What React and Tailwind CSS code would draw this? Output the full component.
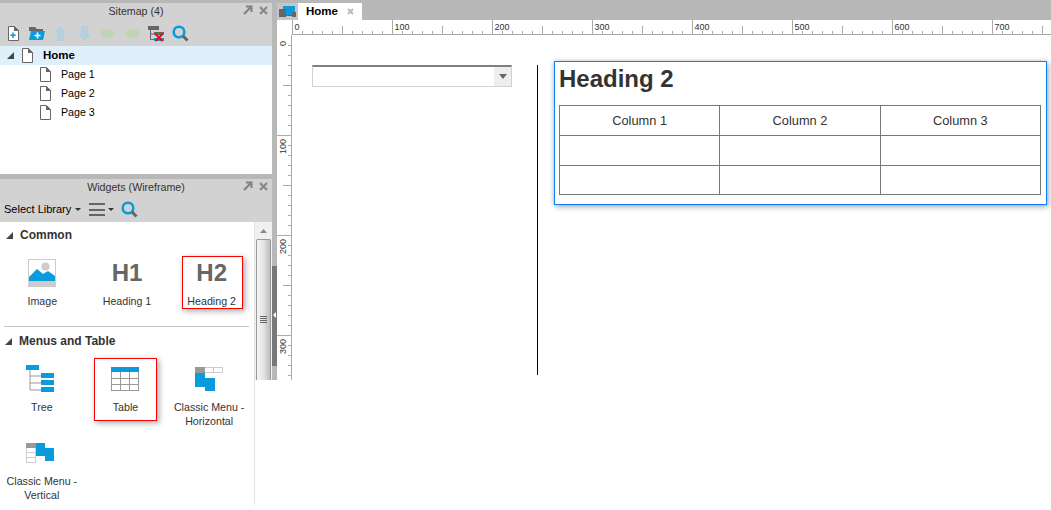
const BLUE = "#0a9bdc";

function PageIcon() {
  return (
    <svg width="11" height="15" viewBox="0 0 11 15" className="shrink-0">
      <path d="M.5.5H6.5L10.5 4.5V14.5H.5Z" fill="#fff" stroke="#666" />
      <path d="M6 0V5H11Z" fill="#666" />
    </svg>
  );
}
function NewPageIcon() {
  return (
    <svg width="11" height="15" viewBox="0 0 11 15" className="shrink-0">
      <path d="M.5.5H6.5L10.5 4.5V14.5H.5Z" fill="#fff" stroke="#666" />
      <path d="M6 0V5H11Z" fill="#666" />
      <path d="M5 6.5V12M2.3 9.2H7.8" stroke={BLUE} strokeWidth="1.6" />
    </svg>
  );
}
function NewFolderIcon() {
  return (
    <svg width="16" height="13" viewBox="0 0 16 13" className="shrink-0">
      <path d="M0 0H6L8 2H14V4H0Z" fill="#666" />
      <path d="M2 4H16L14 13H0Z" fill={BLUE} />
      <path d="M8.5 5.5V11.5M5.5 8.5H11.5" stroke="#fff" strokeWidth="1.6" />
    </svg>
  );
}
function ArrowIcon({ dir, color }) {
  const rot = { up: 0, right: 90, down: 180, left: 270 }[dir];
  return (
    <svg width="15" height="15" viewBox="0 0 15 15" className="shrink-0">
      <path d="M7.5 0L14 7H11V15H4V7H1Z" fill={color} transform={`rotate(${rot} 7.5 7.5)`} />
    </svg>
  );
}
function TreeDeleteIcon() {
  return (
    <svg width="16" height="16" viewBox="0 0 16 16" className="shrink-0">
      <path d="M0 0H11V4H0Z" fill="#666" />
      <path d="M2.5 4V13.5H7M2.5 8H7" stroke="#666" fill="none" />
      <path d="M6 6H16V9H6Z" fill="#666" />
      <path d="M6 12H16V15H6Z" fill={BLUE} />
      <path d="M7.5 8L14.5 15M14.5 8L7.5 15" stroke="#e01010" strokeWidth="2" />
    </svg>
  );
}
function SearchIcon() {
  return (
    <svg width="17" height="17" viewBox="0 0 17 17" className="shrink-0">
      <circle cx="7" cy="7" r="5.3" fill="none" stroke={BLUE} strokeWidth="2.6" />
      <path d="M11 11L15.5 15.5" stroke="#666" strokeWidth="3" />
    </svg>
  );
}
function Triangle() {
  return (
    <svg width="7" height="7" viewBox="0 0 7 7" className="shrink-0">
      <path d="M7 0V7H0Z" fill="#444" />
    </svg>
  );
}
function Caret() {
  return (
    <svg width="6" height="3" viewBox="0 0 6 3" className="shrink-0">
      <path d="M0 0H6L3 3Z" fill="#333" />
    </svg>
  );
}
function PanelTitle({ title }) {
  return (
    <div className="relative h-[16px] flex items-center justify-center text-[10.67px] text-[#333]">
      <span>{title}</span>
      <div className="absolute right-[4px] top-[2px] flex items-center gap-[6px]">
        <svg width="10" height="10" viewBox="0 0 10 10">
          <path d="M1 9L8 2M3 1.5H8.5V7" fill="none" stroke="#808080" strokeWidth="2" />
        </svg>
        <svg width="9" height="9" viewBox="0 0 9 9">
          <path d="M1 1L8 8M8 1L1 8" stroke="#888" strokeWidth="2.2" />
        </svg>
      </div>
    </div>
  );
}

function ImageIcon() {
  return (
    <svg width="28" height="28" viewBox="0 0 28 28" className="-ml-px">
      <rect x=".5" y=".5" width="27" height="27" fill="#fff" stroke="#ccc" />
      <rect x="1" y="22" width="26" height="5" fill="#ccc" />
      <circle cx="17.5" cy="7.5" r="4" fill="#ccc" />
      <path d="M1 18L9 10L15 15L20 12L27 17V22H1Z" fill={BLUE} />
    </svg>
  );
}
function TreeIcon() {
  return (
    <svg width="28" height="28" viewBox="0 0 28 28" className="-ml-[3px]">
      <path d="M4 4V25H15M4 11H15M4 18H15" fill="none" stroke="#999" />
      <rect x="0" y="0" width="13" height="5" fill={BLUE} />
      <rect x="15" y="8" width="13" height="5" fill={BLUE} />
      <rect x="15" y="15" width="13" height="5" fill={BLUE} />
      <rect x="15" y="22" width="13" height="5" fill={BLUE} />
    </svg>
  );
}
function TableIcon() {
  return (
    <svg width="28" height="24" viewBox="0 0 28 24" className="mt-[2px]">
      <rect x=".5" y=".5" width="27" height="23" fill="#fff" stroke="#999" />
      <rect x="0" y="0" width="28" height="5" fill={BLUE} />
      <path d="M0 11.5H28M0 17.5H28M9.5 5V24M18.5 5V24" stroke="#999" fill="none" />
    </svg>
  );
}
function MenuHIcon() {
  return (
    <svg width="28" height="24" viewBox="0 0 28 24" className="mt-[2px]">
      <rect x="0" y="0" width="10" height="6" fill="#999" />
      <path d="M10 .5H27.5V5.5H10M18.5 0V6" fill="#fff" stroke="#ccc" />
      <rect x="0" y="6" width="10" height="14" fill={BLUE} />
      <rect x="10" y="11" width="10" height="13" fill={BLUE} />
    </svg>
  );
}
function MenuVIcon() {
  return (
    <svg width="28" height="20" viewBox="0 0 28 20" className="mt-[4px] -ml-[3px]">
      <rect x="0" y="0" width="10" height="5" fill="#999" />
      <path d="M.5 5V19.5H9.5V5M.5 9.5H9.5M.5 14.5H9.5" fill="#fff" stroke="#ccc" />
      <rect x="10" y="0" width="9" height="13" fill={BLUE} />
      <rect x="19" y="5" width="9" height="13" fill={BLUE} />
    </svg>
  );
}

function Cell({ icon, lines, box, top = 7 }) {
  return (
    <div className="relative flex flex-col items-center" style={{ paddingTop: top }}>
      {box && (
        <div
          className="absolute border border-[#f00] shadow-[2px_2px_6px_rgba(0,0,0,0.35)]"
          style={box}
        />
      )}
      <div className="h-[35px] flex items-start justify-center">{icon}</div>
      {lines.map((l) => (
        <div key={l} className="h-[14px] leading-[14px] text-[10.67px] text-[#333] whitespace-nowrap">
          {l}
        </div>
      ))}
    </div>
  );
}

function SectionHeader({ title, left = 6 }) {
  return (
    <div className="h-[22px] flex items-center gap-[7px] text-[12px] font-bold text-[#333]" style={{ paddingLeft: left }}>
      <Triangle />
      <span>{title}</span>
    </div>
  );
}

function HRuler() {
  const ticks = [];
  for (let v = 0; v <= 760; v += 10) {
    const x = 15.5 + v;
    const h = v % 100 === 0 ? 15 : v % 50 === 0 ? 8 : 3;
    ticks.push(<path key={v} d={`M${x} ${14}V${14 - h}`} stroke="#aaa" />);
    if (v % 100 === 0)
      ticks.push(
        <text key={"t" + v} x={x + 2} y="9.5" fontSize="9" fill="#333" fontFamily="'Liberation Sans'">
          {v}
        </text>
      );
  }
  return (
    <svg width="774" height="15" className="block">
      <path d="M15 14.5H774" stroke="#aaa" />
      {ticks}
    </svg>
  );
}
function VRuler() {
  const ticks = [];
  for (let v = 0; v <= 340; v += 10) {
    const y = v + 0.5;
    const w = v % 100 === 0 ? 15 : v % 50 === 0 ? 8 : 3;
    if (v > 0) ticks.push(<path key={v} d={`M14 ${y}H${14 - w}`} stroke="#aaa" />);
    if (v % 100 === 0)
      ticks.push(
        <text
          key={"t" + v}
          fontSize="9"
          fill="#333"
          fontFamily="'Liberation Sans'"
          transform={`translate(9 ${v + (v === 0 ? 11 : 19)}) rotate(-90)`}
        >
          {v}
        </text>
      );
  }
  return (
    <svg width="15" height="345" className="block">
      <path d="M14.5 0V345" stroke="#aaa" />
      {ticks}
    </svg>
  );
}

const thCls = "border border-[#777] text-[12.8px] font-normal text-[#333] h-[30px] p-0 text-center";
const lastCls = "border border-[#777] h-[29px] p-0";

export default function App() {
  return (
    <div className="w-[1051px] h-[510px] bg-white overflow-hidden flex items-start font-['Liberation_Sans',Arial,sans-serif]">
      {/* Left column */}
      <div className="w-[272px] h-[505px] flex flex-col shrink-0">
        <div className="h-[3px] bg-[#b8b8b8]" />
        {/* Sitemap */}
        <div className="h-[43px] bg-[#d2d2d2] flex flex-col">
          <PanelTitle title="Sitemap (4)" />
          <div className="flex items-center h-[27px] pl-[8px] pt-[2px]">
            <NewPageIcon />
            <div className="ml-[10px]"><NewFolderIcon /></div>
            <div className="ml-[8px]"><ArrowIcon dir="up" color="#b4d0de" /></div>
            <div className="ml-[9px]"><ArrowIcon dir="down" color="#b4d0de" /></div>
            <div className="ml-[9px]"><ArrowIcon dir="right" color="#c2d4b6" /></div>
            <div className="ml-[8px]"><ArrowIcon dir="left" color="#c2d4b6" /></div>
            <div className="ml-[9px]"><TreeDeleteIcon /></div>
            <div className="ml-[8px]"><SearchIcon /></div>
          </div>
        </div>
        <div className="h-[128px] bg-white text-[10.67px] text-black">
          <div className="h-[19px] bg-[#e0f0fb] flex items-center pl-[7px]">
            <Triangle />
            <div className="ml-[8px]"><PageIcon /></div>
            <span className="ml-[10px] text-[11.5px] font-bold">Home</span>
          </div>
          {["Page 1", "Page 2", "Page 3"].map((p) => (
            <div key={p} className="h-[19px] flex items-center pl-[40px]">
              <PageIcon />
              <span className="ml-[10px] mb-[2px]">{p}</span>
            </div>
          ))}
        </div>
        <div className="h-[5px] bg-[#b8b8b8]" />
        {/* Widgets */}
        <div className="h-[43px] bg-[#d2d2d2] flex flex-col">
          <PanelTitle title="Widgets (Wireframe)" />
          <div className="flex items-center h-[27px] pl-[4px] pt-[2px] text-[11px] text-black">
            <span>Select Library</span>
            <div className="ml-[4px]"><Caret /></div>
            <div className="ml-[8px] w-[16px] h-[13px] flex flex-col justify-between">
              <div className="h-[2px] bg-[#666]" />
              <div className="h-[2px] bg-[#666]" />
              <div className="h-[2px] bg-[#666]" />
            </div>
            <div className="ml-[3px]"><Caret /></div>
            <div className="ml-[7px]"><SearchIcon /></div>
          </div>
        </div>
        <div className="flex-1 flex items-start min-h-0">
          <div className="w-[255px] h-[283px] shrink-0 border-r border-[#e4e4e4] pt-[2px]">
            <SectionHeader title="Common" />
            <div className="grid grid-cols-3 mt-[10px] h-[70px]">
              <Cell top={3} icon={<ImageIcon />} lines={["Image"]} />
              <Cell top={3} icon={<div className="text-[24px] leading-[28px] font-bold text-[#666]">H1</div>} lines={["Heading 1"]} />
              <Cell
                top={3}
                icon={<div className="text-[24px] leading-[28px] font-bold text-[#666]">H2</div>}
                lines={["Heading 2"]}
                box={{ left: 13, width: 61, top: 0, height: 53 }}
              />
            </div>
            <div className="h-px bg-[#c4c4c4] ml-[4px] mr-[5px]" />
            <div className="mt-[3px]"><SectionHeader title="Menus and Table" left={5} /></div>
            <div className="grid grid-cols-3 mt-[6px] mr-[3px]">
              <div className="h-[74px]"><Cell icon={<TreeIcon />} lines={["Tree"]} /></div>
              <div className="h-[74px]">
                <Cell icon={<TableIcon />} lines={["Table"]} box={{ left: 10, width: 63, top: 0, height: 63 }} />
              </div>
              <div className="h-[74px]"><Cell icon={<MenuHIcon />} lines={["Classic Menu -", "Horizontal"]} /></div>
              <div className="h-[66px]"><Cell icon={<MenuVIcon />} lines={["Classic Menu -", "Vertical"]} /></div>
            </div>
          </div>
          {/* Scrollbar */}
          <div className="w-[17px] h-[158px] bg-[#f0f0f0] flex flex-col items-center">
            <div className="h-[17px] flex items-center justify-center">
              <svg width="7" height="4" viewBox="0 0 7 4"><path d="M3.5 0L7 4H0Z" fill="#888" /></svg>
            </div>
            <div className="w-[15px] flex-1 rounded-t-[2px] border border-b-0 border-[#999] bg-gradient-to-r from-[#f4f4f4] via-[#e4e4e4] to-[#bdbdbd] flex flex-col items-center pt-[76px] gap-px">
              <div className="w-[7px] h-px bg-[#666]" />
              <div className="w-[7px] h-px bg-[#666]" />
              <div className="w-[7px] h-px bg-[#666]" />
              <div className="w-[7px] h-px bg-[#666]" />
            </div>
          </div>
        </div>
      </div>

      {/* Splitter */}
      <div className="w-[5px] h-[380px] shrink-0 bg-[#b8b8b8] flex flex-col pt-[266px]">
        <div className="relative h-[100px] bg-[#787878]">
          <div className="absolute left-[1px] top-[46px] w-0 h-0 border-y-[3px] border-y-transparent border-r-[3px] border-r-white" />
        </div>
      </div>

      {/* Main */}
      <div className="flex-1 h-[380px] flex flex-col min-w-0">
        <div className="h-[20px] bg-[#b8b8b8] pt-[3px] flex items-stretch">
          <div className="w-[21px] bg-[#c6c6c6]">
            <svg width="21" height="17" viewBox="0 0 21 17" className="block">
              <rect x="6" y="3" width="12" height="7" fill={BLUE} />
              <rect x="9" y="10" width="6" height="2" fill={BLUE} />
              <rect x="2" y="6" width="7" height="8" fill="#666" />
              <rect x="15" y="9" width="4" height="5" fill="#666" />
              <rect x="9" y="12" width="6" height="1" fill="#666" />
            </svg>
          </div>
          <div className="w-[64px] bg-white flex items-center pl-[8px] text-[11.5px] font-bold text-black">
            <span>Home</span>
            <svg width="7" height="7" viewBox="0 0 7 7" className="ml-[9px]">
              <path d="M1 1L6 6M6 1L1 6" stroke="#bbb" strokeWidth="2" />
            </svg>
          </div>
        </div>
        <HRuler />
        <div className="flex flex-1 min-h-0">
          <VRuler />
          <div className="flex-1 flex items-start pt-[26px] min-w-0">
            <div className="ml-[20px] mt-[4px] w-[200px] h-[22px] shrink-0 flex border border-[#d0d0d0] border-t-2 border-t-[#808080] bg-white">
              <div className="flex-1" />
              <div className="w-[17px] bg-[#eeeeee] flex items-center justify-center">
                <svg width="8" height="5" viewBox="0 0 8 5"><path d="M0 0H8L4 5Z" fill="#666" /></svg>
              </div>
            </div>
            <div className="ml-[25px] mt-[4px] w-px h-[310px] bg-black shrink-0" />
            <div className="ml-[16px] w-[493px] h-[144px] shrink-0 border border-[#0a7fff] shadow-[2px_2px_6px_rgba(0,0,0,0.3),-1px_0_4px_rgba(0,0,0,0.15)] pl-[4px] pr-[5px] bg-white">
              <div className="h-[43px] pt-[3px] text-[24px] leading-[28px] font-bold text-[#333]">Heading 2</div>
              <table className="w-[482px] h-[89px] border-collapse table-fixed">
                <tbody>
                  <tr>
                    <th className={thCls}>Column 1</th>
                    <th className={thCls}>Column 2</th>
                    <th className={thCls}>Column 3</th>
                  </tr>
                  <tr><td className={thCls} /><td className={thCls} /><td className={thCls} /></tr>
                  <tr><td className={lastCls} /><td className={lastCls} /><td className={lastCls} /></tr>
                </tbody>
              </table>
            </div>
          </div>
        </div>
      </div>
    </div>
  );
}
